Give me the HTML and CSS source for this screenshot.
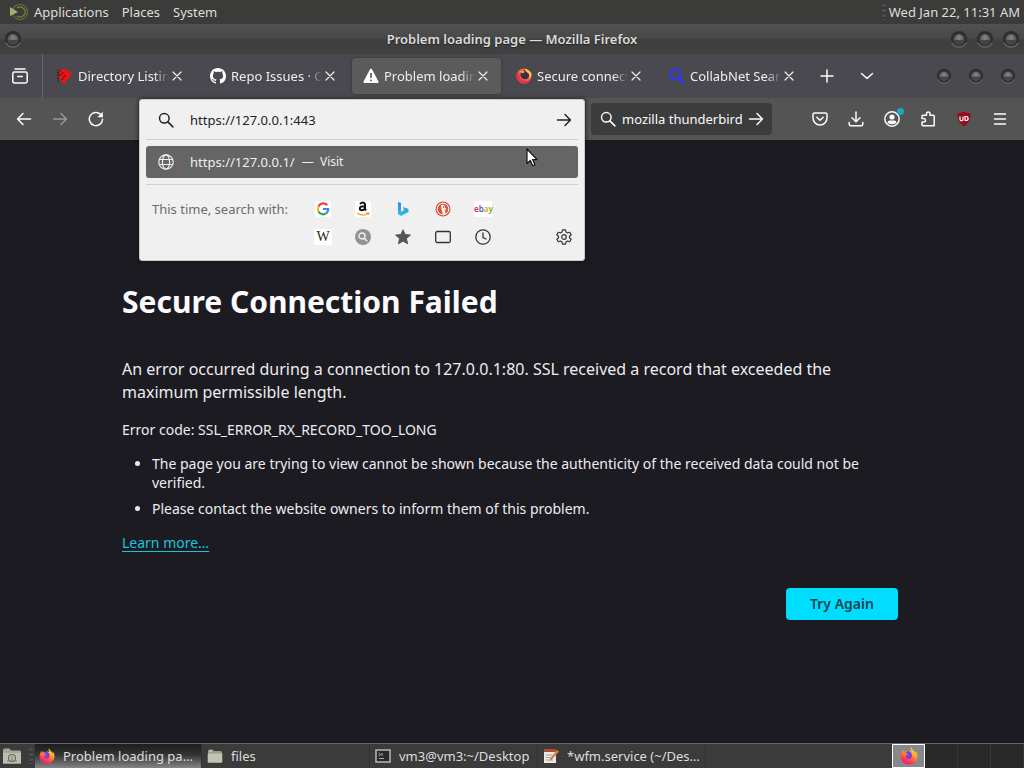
FILE: index.html
```html
<!DOCTYPE html>
<html lang="en">
<head>
<meta charset="utf-8">
<meta name="viewport" content="width=device-width, initial-scale=1">
<title>Problem loading page</title>
<link rel="stylesheet" href="styles.css">
</head>
<body>
<svg class="defs" aria-hidden="true">
  <defs>
    <linearGradient id="flame" x1="0.8" y1="0" x2="0.3" y2="1">
      <stop offset="0" stop-color="#fff04a"/><stop offset="0.4" stop-color="#ff9a2e"/><stop offset="0.75" stop-color="#ff3a4c"/><stop offset="1" stop-color="#e0208c"/>
    </linearGradient>
    <radialGradient id="bump" cx="0.5" cy="0.35" r="0.6">
      <stop offset="0" stop-color="#8a8a8a"/><stop offset="1" stop-color="#484848"/>
    </radialGradient>
    <linearGradient id="bingblue" x1="0" y1="0" x2="0" y2="1">
      <stop offset="0" stop-color="#2f86dd"/><stop offset="1" stop-color="#35c0ea"/>
    </linearGradient>
    <symbol id="firefox" viewBox="0 0 16 16">
      <circle cx="8" cy="8.6" r="5" fill="#7a3fd8"/>
      <path fill="url(#flame)" d="M10 .3c-.7 1.2-.4 2.4.8 3.7-1-.6-2-.7-3-.4 1.8.8 3 2.4 2.8 4.4-.2 1.700-1.600 2.800-3.100 2.600-1.400-.2-2.200-1.200-2.200-2.200 0-1.100.9-1.700 2-1.500-.2-.9-1.300-1.400-2.500-1.200.2-.8.7-1.500 1.400-1.900-1.100-.1-1.900.3-2.500 1-.4-.5-.5-1.400-.3-2.100C1.500 4 .5 6 .5 8.300.5 12.500 3.900 15.800 8 15.800s7.500-3.300 7.500-7.500c0-1.900-.7-3.500-1.800-4.700.1.800.1 1.400-.1 2C12.900 3.300 10.600 2.700 10 .3z"/>
    </symbol>
    <symbol id="magnifier" viewBox="0 0 16 16">
      <circle cx="6.300" cy="6.300" r="4.800" fill="none" stroke="currentColor" stroke-width="1.500"/>
      <path d="m9.900 9.900 5 5" stroke="currentColor" stroke-width="1.500" stroke-linecap="round"/>
    </symbol>
    <symbol id="arrow" viewBox="0 0 16 16">
      <path d="M1.500 8h13M9 2.500 14.500 8 9 13.500" fill="none" stroke="currentColor" stroke-width="1.500" stroke-linecap="round" stroke-linejoin="round"/>
    </symbol>
    <symbol id="cross" viewBox="0 0 10 10">
      <path d="m1 1 8 8M9 1 1 9" stroke="currentColor" stroke-width="1.200" stroke-linecap="round"/>
    </symbol>
    <symbol id="knob" viewBox="0 0 20 20">
      <circle cx="10" cy="10" r="9" fill="#2f2f2f"/>
      <path d="M2 14a9 9 0 0 0 16 0" fill="none" stroke="#626262" stroke-width="1.500"/>
      <circle cx="10" cy="10.500" r="6" fill="url(#bump)"/>
      <path d="M4.500 11a5.500 5.500 0 0 0 11 0z" fill="#444"/>
    </symbol>
    <symbol id="folder" viewBox="0 0 16 16">
      <path d="M1 3q0-1.500 1.500-1.500h3L7 3h6.500Q15 3 15 4.500v9H1z" fill="#999c8b"/>
      <path d="M.7 5.500h14.600V14q0 .8-.8.8H1.500q-.8 0-.8-.8z" fill="#c1c4b3"/>
      <path d="M2 3h3" stroke="#d9dbcf"/>
    </symbol>
  </defs>
</svg>

<header class="panel">
  <nav class="panel-menu">
    <button type="button"><svg class="distro" viewBox="0 0 20 18"><circle cx="11" cy="9" r="7.500" fill="none" stroke="#66743a" stroke-width="1.200"/><path d="M8 5a5 5 0 1 1 0 8" fill="none" stroke="#7b8945" stroke-width="1.300"/><path d="m1 4 8 5-8 4z" fill="#a5ae6d"/></svg>Applications</button>
    <button type="button">Places</button>
    <button type="button">System</button>
  </nav>
  <span class="handle"></span>
  <time class="clock">Wed Jan 22, 11:31 AM</time>
</header>

<div class="titlebar">
  <button type="button" aria-label="Window menu"><svg class="knob"><use href="#knob"/></svg></button>
  <h1 class="window-title">Problem loading page — Mozilla Firefox</h1>
  <div class="window-buttons">
    <button type="button" aria-label="Minimize"><svg class="knob"><use href="#knob"/></svg></button>
    <button type="button" aria-label="Maximize"><svg class="knob"><use href="#knob"/></svg></button>
    <button type="button" aria-label="Close"><svg class="knob"><use href="#knob"/></svg></button>
  </div>
</div>

<div class="tabstrip">
  <button type="button" class="tab-overview" aria-label="Firefox View"><svg class="icon" viewBox="0 0 16 16"><path d="M3 .9h10M2.500 4h11q1.700 0 1.700 1.700v7.500q0 1.700-1.700 1.700h-11Q.8 14.900.8 13.200V5.700Q.8 4 2.500 4zM5.700 8.600h4.600" fill="none" stroke="currentColor" stroke-width="1.500" stroke-linecap="round"/></svg></button>
  <div class="tabs">
    <div class="tab">
      <svg class="icon" viewBox="0 0 16 16"><path fill="#ed1218" d="m1 1 4 1 3-2 1 3 3-1 1 3 3 1-3 2-1 3-3 1-1 4-3-1-1-4-3-2 2-3z"/><path d="M1 1.500v13M2.500 3h2M2 7h3M5 5h2M7 8h2M5 12l2-3" stroke="#23080a" stroke-width="1" stroke-dasharray="1.500 1"/></svg>
      <span class="tab-label">Directory Listing</span><button type="button" class="tab-close" aria-label="Close tab"><svg><use href="#cross"/></svg></button>
    </div>
    <div class="tab">
      <svg class="icon" viewBox="0 0 16 16"><path fill="#fff" d="M8 0C3.580 0 0 3.580 0 8c0 3.540 2.290 6.530 5.470 7.590.4.070.550-.170.550-.380 0-.190-.010-.820-.010-1.490-2.010.370-2.530-.490-2.690-.940-.090-.230-.480-.940-.820-1.130-.280-.150-.680-.520-.010-.530.630-.010 1.080.580 1.230.820.720 1.210 1.870.870 2.330.660.070-.520.280-.870.510-1.070-1.780-.2-3.640-.890-3.640-3.950 0-.870.310-1.590.820-2.150-.080-.2-.360-1.020.080-2.120 0 0 .670-.210 2.200.820.640-.180 1.320-.270 2-.270s1.360.090 2 .270c1.530-1.040 2.200-.820 2.200-.820.440 1.100.160 1.920.080 2.120.510.560.820 1.270.820 2.150 0 3.070-1.870 3.750-3.650 3.950.290.250.540.730.540 1.480 0 1.070-.010 1.930-.010 2.200 0 .210.150.460.550.380A8 8 0 0 0 16 8c0-4.420-3.580-8-8-8z"/></svg>
      <span class="tab-label">Repo Issues · GitHub</span><button type="button" class="tab-close" aria-label="Close tab"><svg><use href="#cross"/></svg></button>
    </div>
    <div class="tab tab-active">
      <svg class="icon" viewBox="0 0 16 16"><path d="M8 1.800 14.500 14h-13z" fill="#fff" stroke="#fff" stroke-width="2.200" stroke-linejoin="round"/><path d="M8 5v5" stroke="#444" stroke-width="1.500"/><circle cx="8" cy="12.300" r=".9" fill="#444"/></svg>
      <span class="tab-label">Problem loading page</span><button type="button" class="tab-close" aria-label="Close tab"><svg><use href="#cross"/></svg></button>
    </div>
    <div class="tab">
      <svg class="icon" viewBox="0 0 16 16"><circle cx="8" cy="8" r="7.500" fill="#fb6436"/><path d="M1 4.500A7.500 7.500 0 0 0 6 15.200q6 1.200 9-4-4 3-8 1T3.500 6z" fill="#e8344b"/><circle cx="9" cy="6.800" r="4.500" fill="#34304e"/><path d="M9.500.8q-1 2 2 4t1 5.500q3-1 3-4T9.500.8z" fill="#ffc444"/><path d="M3.500 3.500q3-2 5.500.5L6.500 5.500z" fill="#ff9a38"/></svg>
      <span class="tab-label">Secure connection</span><button type="button" class="tab-close" aria-label="Close tab"><svg><use href="#cross"/></svg></button>
    </div>
    <div class="tab">
      <svg class="icon" viewBox="0 0 16 16"><circle cx="6.500" cy="6.500" r="5" fill="none" stroke="#303de5" stroke-width="2.500"/><path d="m9.500 10.500 5 4.500" stroke="#303de5" stroke-width="3"/></svg>
      <span class="tab-label">CollabNet Search</span><button type="button" class="tab-close" aria-label="Close tab"><svg><use href="#cross"/></svg></button>
    </div>
  </div>
  <button type="button" class="tool" aria-label="New tab"><svg class="icon" viewBox="0 0 16 16"><path d="M8 2v12M2 8h12" stroke="currentColor" stroke-width="1.500" stroke-linecap="round"/></svg></button>
  <button type="button" class="tool" aria-label="List all tabs"><svg class="icon" viewBox="0 0 16 16"><path d="m2.500 5.500 5.500 5 5.500-5" fill="none" stroke="currentColor" stroke-width="1.500" stroke-linecap="round" stroke-linejoin="round"/></svg></button>
  <div class="client-buttons">
    <button type="button" aria-label="Minimize"><svg class="knob"><use href="#knob"/></svg></button>
    <button type="button" aria-label="Maximize"><svg class="knob"><use href="#knob"/></svg></button>
    <button type="button" aria-label="Close"><svg class="knob"><use href="#knob"/></svg></button>
  </div>
</div>

<div class="toolbar">
  <div class="tools">
    <button type="button" class="tool" aria-label="Back"><svg class="icon" viewBox="0 0 16 16"><path d="M14.500 8h-13M7 2.500 1.500 8 7 13.500" fill="none" stroke="currentColor" stroke-width="1.500" stroke-linecap="round" stroke-linejoin="round"/></svg></button>
    <button type="button" class="tool" aria-label="Forward" disabled><svg class="icon"><use href="#arrow"/></svg></button>
    <button type="button" class="tool" aria-label="Reload"><svg class="icon" viewBox="0 0 16 16"><path d="M14.500 8.200A6.600 6.600 0 1 1 12.700 3.500L14 5" fill="none" stroke="currentColor" stroke-width="1.500" stroke-linecap="round"/><path d="M9.300 6.200h5.500V.8z" fill="currentColor"/></svg></button>
  </div>
  <div class="url-slot">
    <div class="url-popup">
      <div class="url-row">
        <svg class="icon"><use href="#magnifier"/></svg>
        <input class="url-input" type="text" aria-label="Address" value="https://127.0.0.1:443">
        <button type="button" aria-label="Go"><svg class="icon"><use href="#arrow"/></svg></button>
      </div>
      <div class="suggestions">
        <a class="suggestion" href="#">
          <svg class="icon" viewBox="0 0 16 16"><g fill="none" stroke="currentColor" stroke-width="1.200"><circle cx="8" cy="8" r="7.200"/><ellipse cx="8" cy="8" rx="3.600" ry="7.200"/><path d="M1.500 5.500h13M1.500 10.500h13"/></g></svg>
          <span class="suggestion-url">https://127.0.0.1/</span><span class="suggestion-action">—&nbsp; Visit</span>
          <svg class="pointer" viewBox="0 0 12 19"><path d="M1 1v14.500l3.300-3 2.400 5.300 2.300-1-2.400-5.200H11z" fill="#fff" stroke="#111" stroke-width="1.200" stroke-linejoin="round"/></svg>
        </a>
      </div>
      <div class="one-offs">
        <span class="one-offs-label">This time, search with:</span>
        <div class="engines">
          <button type="button" aria-label="Google"><svg class="engine" viewBox="0 0 16 16"><rect width="16" height="16" rx="2" fill="#fff"/><g fill="none" stroke-width="2.200"><path d="M12.200 4.200A5.200 5.200 0 0 0 3.500 5.500" stroke="#ea4335"/><path d="M3.500 5.500a5.200 5.200 0 0 0 0 5" stroke="#fbbc05"/><path d="M3.500 10.500a5.200 5.200 0 0 0 7.900 1.600" stroke="#34a853"/><path d="M11.400 12.100A5.200 5.200 0 0 0 13.200 8H8" stroke="#4285f4"/></g></svg></button>
          <button type="button" aria-label="Amazon"><svg class="engine" viewBox="0 0 16 16"><rect width="16" height="16" rx="2" fill="#fff"/><path d="M5 3q3-2.800 5 0v5.200l1.300 1M10 5.200q-5.200-.2-5.200 2.300 0 1.800 2.200 1.800T10 7" fill="none" stroke="#111" stroke-width="2"/><path d="M2 12q6 4 11 .5M11 12h3l-1 2" fill="none" stroke="#f59b22" stroke-width="1.200"/></svg></button>
          <button type="button" aria-label="Bing"><svg class="engine" viewBox="0 0 16 16"><path d="m3 1 3 1v9l3-2-1-3 5.500 2v3L6 15l-3-2z" fill="url(#bingblue)"/></svg></button>
          <button type="button" aria-label="DuckDuckGo"><svg class="engine" viewBox="0 0 16 16"><circle cx="8" cy="8" r="7.500" fill="#d9553c"/><circle cx="8" cy="8" r="5.800" fill="none" stroke="#fff"/><path d="M6 4q4-1 4 3l1.500 1-1.500 1 .5 4.500H8L6.500 8z" fill="#fff"/><path d="m9 8 3 .5L9 9.500z" fill="#f8b931"/><circle cx="8.500" cy="6" r=".7" fill="#35415f"/></svg></button>
          <button type="button" aria-label="eBay"><span class="ebay"><i>e</i><i>b</i><i>a</i><i>y</i></span></button>
          <button type="button" aria-label="Wikipedia"><span class="wiki">W</span></button>
          <button type="button" aria-label="Search engine"><svg class="engine" viewBox="0 0 16 16"><circle cx="8" cy="8" r="8" fill="#929292"/><circle cx="7" cy="7" r="3" fill="none" stroke="#f2f2f2" stroke-width="1.300"/><path d="m9.200 9.200 3 3" stroke="#f2f2f2" stroke-width="1.500"/></svg></button>
          <button type="button" aria-label="Bookmarks"><svg class="engine" viewBox="0 0 16 16"><path d="m8 .8 2.100 4.800 5.300.5-4 3.500 1.200 5.200L8 12.100l-4.600 2.700 1.200-5.200-4-3.500 5.300-.5z" fill="#555" stroke="#555" stroke-linejoin="round"/></svg></button>
          <button type="button" aria-label="Tabs"><svg class="engine" viewBox="0 0 16 16"><rect x=".7" y="2.500" width="14.600" height="11" rx="1.500" fill="none" stroke="#333" stroke-width="1.300"/></svg></button>
          <button type="button" aria-label="History"><svg class="engine" viewBox="0 0 16 16"><circle cx="8" cy="8" r="7.200" fill="none" stroke="#333" stroke-width="1.300"/><path d="M8 4v4.500l3 1.500" fill="none" stroke="#333" stroke-width="1.300" stroke-linecap="round"/></svg></button>
        </div>
        <button type="button" class="settings" aria-label="Search settings"><svg class="engine" viewBox="0 0 16 16"><path d="m6.500.8h3l.5 2.300 1.500.9 2.200-.8 1.500 2.600L13.500 7.300v1.400l1.700 1.500-1.500 2.600-2.200-.8-1.500.9-.5 2.300h-3L6 12.900 4.500 12l-2.200.8L.8 10.200l1.700-1.500V7.300L.8 5.800l1.500-2.600 2.200.8L6 3.100z" fill="none" stroke="#333" stroke-width="1.200" stroke-linejoin="round"/><circle cx="8" cy="8" r="2.300" fill="none" stroke="#333" stroke-width="1.200"/></svg></button>
      </div>
    </div>
  </div>
  <div class="search-box">
    <svg class="icon"><use href="#magnifier"/></svg>
    <input type="text" aria-label="Search" value="mozilla thunderbird">
    <button type="button" aria-label="Search"><svg class="icon"><use href="#arrow"/></svg></button>
  </div>
  <div class="tools">
    <button type="button" class="tool" aria-label="Save to Pocket"><svg class="icon" viewBox="0 0 16 16"><path d="M2.500 2h11q1.500 0 1.500 1.500V7A7 7 0 0 1 1 7V3.500Q1 2 2.500 2zM4.800 6.300 8 9.300l3.200-3" fill="none" stroke="currentColor" stroke-width="1.500" stroke-linecap="round" stroke-linejoin="round"/></svg></button>
    <button type="button" class="tool" aria-label="Downloads"><svg class="icon" viewBox="0 0 16 16"><path d="M8 1v9.500M4 6.800l4 4 4-4M1.200 11.500v1.800q0 1.500 1.500 1.500h10.600q1.500 0 1.500-1.500v-1.800" fill="none" stroke="currentColor" stroke-width="1.500" stroke-linecap="round" stroke-linejoin="round"/></svg></button>
    <button type="button" class="tool account" aria-label="Account"><svg class="icon" viewBox="0 0 16 16"><circle cx="8" cy="8" r="7.200" fill="none" stroke="currentColor" stroke-width="1.500"/><circle cx="8" cy="6" r="2.600" fill="currentColor"/><path d="M3.500 11.800q0-2.300 2.300-2.300h4.400q2.300 0 2.300 2.300-4.500 3-9 0z" fill="currentColor"/></svg><span class="account-badge"></span></button>
    <button type="button" class="tool" aria-label="Extensions"><svg class="icon" viewBox="0 0 16 16"><path d="M6.500 4.200V3q0-2 1.800-2T10 3v1.200h3.200q1 0 1 1v9.500H3q-1 0-1-1V11h1.700q1.800 0 1.800-1.700T3.700 7.500H2V5.200q0-1 1-1z" fill="none" stroke="currentColor" stroke-width="1.500" stroke-linejoin="round"/></svg></button>
    <button type="button" class="tool" aria-label="uBlock Origin"><svg class="icon" viewBox="0 0 16 16"><path d="M8 .5q3 1.700 6.700 1.700 0 9.500-6.700 13.300Q1.300 11.700 1.300 2.200 5 2.200 8 .5z" fill="#970b18"/><path d="M4 5.500v2.800q0 1.500 1.500 1.500T7 8.300V5.500M9 5.500v4h.8q2.300 0 2.300-2t-2.300-2z" fill="none" stroke="#fff" stroke-width="1.200"/></svg></button>
    <button type="button" class="tool" aria-label="Application menu"><svg class="icon" viewBox="0 0 16 16"><path d="M2.500 3h11M2.500 8h11M2.500 13h11" stroke="currentColor" stroke-width="1.500" stroke-linecap="round"/></svg></button>
  </div>
</div>

<main class="page">
  <h2>Secure Connection Failed</h2>
  <p class="summary">An error occurred during a connection to 127.0.0.1:80. SSL received a record that exceeded the maximum permissible length.</p>
  <p class="detail">Error code: SSL_ERROR_RX_RECORD_TOO_LONG</p>
  <ul class="detail">
    <li>The page you are trying to view cannot be shown because the authenticity of the received data could not be verified.</li>
    <li>Please contact the website owners to inform them of this problem.</li>
  </ul>
  <p class="detail"><a href="#">Learn more…</a></p>
  <div class="actions"><button type="button" class="primary">Try Again</button></div>
</main>

<footer class="taskbar">
  <button type="button" class="show-desktop" aria-label="Show desktop"><svg class="desk-icon" viewBox="0 0 18 16"><path d="M0 2q0-1.500 1.500-1.500h5L8 2.500h8.500q1.500 0 1.500 1.500v11.500H0z" fill="#a4a898"/><path d="M0 5h18v10.500H0z" fill="#bcbfb0"/><circle cx="9" cy="10" r="3.500" fill="none" stroke="#686d5e" stroke-width="1.200"/><path d="M4 13h10M9 8v4" stroke="#74786a"/></svg></button>
  <span class="handle"></span>
  <div class="tasks">
    <button type="button" class="task task-active"><svg class="task-icon"><use href="#firefox"/></svg><span>Problem loading page — Mozilla Firefox</span></button>
    <button type="button" class="task"><svg class="task-icon"><use href="#folder"/></svg><span>files</span></button>
    <button type="button" class="task"><svg class="task-icon" viewBox="0 0 16 16"><rect x="1" y="2" width="14" height="12" fill="#292b2b" stroke="#b8b8b8" stroke-width="1.500"/><path d="m3.500 5 2 1.500-2 1.500M7 5v3M4 10.500h5" stroke="#a9a9a9" fill="none"/></svg><span>vm3@vm3:~/Desktop</span></button>
    <button type="button" class="task"><svg class="task-icon" viewBox="0 0 16 16"><path d="M1 2h12v13H1z" fill="#ece9e3"/><path d="M1 1h12v3H1z" fill="#ad4c38"/><path d="M3 7h6M3 9.500h4M3 12h7" stroke="#a8a49c"/><path d="m14 2 2 1.500-7 8-2.500 1.500.7-3z" fill="#d88344"/></svg><span>*wfm.service (~/Des…</span></button>
  </div>
  <div class="workspaces">
    <button type="button" class="workspace workspace-active" aria-label="Workspace 1"><svg><use href="#firefox"/></svg></button>
    <button type="button" class="workspace" aria-label="Workspace 2"></button>
    <button type="button" class="workspace" aria-label="Workspace 3"></button>
    <button type="button" class="workspace" aria-label="Workspace 4"></button>
  </div>
</footer>
</body>
</html>
```

FILE: styles.css
```css
* {
  box-sizing: border-box;
}

body {
  margin: 0;
  min-height: 100vh;
  display: flex;
  flex-direction: column;
  background: #1c1b22;
  color: #fbfbfe;
  font: 13px/18px "Noto Sans", "Open Sans", sans-serif;
}

button,
input {
  margin: 0;
  padding: 0;
  border: 0;
  background: none;
  color: inherit;
  font: inherit;
}

button {
  display: inline-flex;
  align-items: center;
  justify-content: center;
}

input {
  min-width: 0;
  outline: 0;
}

svg {
  display: block;
  flex: none;
}

.defs {
  position: absolute;
  width: 0;
  height: 0;
}

.icon {
  width: 16px;
  height: 16px;
}

/* Desktop panel */
.panel {
  display: flex;
  align-items: center;
  height: 24px;
  padding: 0 4px 0 9px;
  background: #3b3b39;
  color: #dedede;
}

.panel-menu {
  display: flex;
  gap: 13px;
  margin-right: auto;
}

.panel-menu button {
  gap: 5px;
}

.distro {
  width: 20px;
  height: 18px;
}

.handle {
  width: 4px;
  height: 16px;
  background: repeating-linear-gradient(#4c4c4c 0 3px, #363636 3px 5px);
}

.clock {
  margin-left: 3px;
}

/* Window title */
.titlebar {
  display: grid;
  grid-template-columns: 1fr auto 1fr;
  align-items: center;
  height: 30px;
  padding: 0 4px;
  background: linear-gradient(#515151, #494949 45%, #3f3f3f 55%, #404040);
}

.titlebar > button {
  justify-self: start;
}

.window-title {
  margin: 0;
  font-size: 13px;
  font-weight: 600;
  color: #dcdcdc;
  text-shadow: 0 1px 1px #222;
}

.window-buttons,
.client-buttons {
  display: flex;
  gap: 8px;
  justify-content: flex-end;
}

.knob {
  width: 18px;
  height: 18px;
}

/* Tabs */
.tabstrip {
  display: flex;
  align-items: center;
  height: 44px;
  background: #4a494f;
}

.tab-overview {
  width: 43px;
  height: 44px;
  padding-right: 2px;
  border-right: 1px solid #69686e;
}

.tabs {
  display: flex;
  gap: 4px;
  margin: 0 4px 0 3px;
}

.tab {
  display: flex;
  align-items: center;
  width: 149px;
  height: 36px;
  padding: 0 13px 0 11px;
  border-radius: 4px;
  color: #eeeeef;
}

.tab-active {
  background: #5b5b5b;
  box-shadow: 0 0 3px #333;
}

.tab-label {
  flex: 1;
  margin-left: 5px;
  overflow: hidden;
  white-space: nowrap;
  mask-image: linear-gradient(to right, #000 84%, transparent);
}

.tab-close {
  margin-left: 3px;
}

.tab-close svg {
  width: 10px;
  height: 10px;
}

.tabstrip .tool {
  width: 32px;
  margin-right: 8px;
}

.client-buttons {
  gap: 16px;
  margin-left: auto;
  padding-right: 8px;
}

.client-buttons .knob {
  width: 16px;
  height: 16px;
}

/* Toolbar */
.toolbar {
  display: flex;
  align-items: center;
  height: 43px;
  padding: 0 8px;
  background: #545454;
  border-bottom: 1px solid #19191c;
}

.tools {
  display: flex;
  gap: 4px;
}

.tool {
  width: 32px;
  height: 32px;
}

.tool:disabled {
  color: #969696;
}

.account {
  position: relative;
}

.account-badge {
  position: absolute;
  top: 5px;
  right: 4px;
  width: 7px;
  height: 7px;
  border-radius: 50%;
  background: #1ba7c1;
}

.url-slot {
  position: relative;
  flex: 1;
  height: 40px;
  margin-left: 27px;
}

.url-popup {
  position: absolute;
  inset: 0 0 auto;
  z-index: 2;
  padding: 0 6px;
  border: 1px solid #c9c9c9;
  border-radius: 3px;
  background: #f0f0f0;
  color: #222;
  box-shadow: 0 0 4px #111;
}

.url-row {
  display: flex;
  align-items: center;
  height: 40px;
  padding: 0 6px 0 12px;
  border-bottom: 1px solid #cfcfcf;
}

.url-input {
  flex: 1;
  margin-left: 16px;
}

.suggestions {
  padding: 6px 0;
  border-bottom: 1px solid #cfcfcf;
}

.suggestion {
  position: relative;
  display: flex;
  align-items: center;
  height: 32px;
  padding: 0 12px;
  border-radius: 3px;
  background: #656565;
  color: #efefef;
  text-decoration: none;
}

.suggestion-url {
  margin: 0 7px 0 16px;
}

.suggestion-action {
  font-size: 12px;
}

.pointer {
  position: absolute;
  top: 2px;
  right: 40px;
  width: 12px;
  height: 19px;
}

.one-offs {
  display: flex;
  align-items: flex-start;
  padding: 10px 6px 9px;
}

.one-offs-label {
  flex: none;
  width: 151px;
  line-height: 28px;
  color: #6c6c6c;
}

.engines {
  display: grid;
  grid-template-columns: repeat(5, 40px);
  grid-auto-rows: 28px;
}

.engine {
  width: 16px;
  height: 16px;
}

.ebay,
.wiki {
  width: 18px;
  background: #fff;
  line-height: 16px;
}

.ebay {
  font-size: 8px;
}

.ebay i {
  font-style: normal;
  font-weight: 600;
  color: #d9304d;
}

.ebay i:nth-child(2) {
  color: #3f5bc4;
}

.ebay i:nth-child(3) {
  color: #d9a400;
}

.ebay i:nth-child(4) {
  color: #6fa91c;
}

.wiki {
  font-family: "Liberation Serif", serif;
  font-size: 14px;
}

.settings {
  align-self: flex-end;
  width: 16px;
  height: 28px;
  margin-left: auto;
}

.search-box {
  display: flex;
  align-items: center;
  width: 181px;
  height: 32px;
  margin: 0 32px 0 6px;
  padding: 0 8px 0 9px;
  border-radius: 4px;
  background: #3c3c3c;
}

.search-box input {
  flex: 1;
  margin: 0 6px;
}

/* Error page */
.page {
  flex: 1;
  padding: 141px 126px 40px 122px;
  color: #ececf0;
}

.page h2 {
  margin: 0 0 36px;
  color: #fbfbfe;
  font-size: 30px;
  font-weight: 700;
  line-height: 40px;
}

.summary {
  margin: 0 0 16px;
  font-size: 16px;
  line-height: 23px;
}

.detail {
  margin: 0 0 15px;
  font-size: 14px;
  line-height: 19px;
}

ul.detail {
  padding-left: 30px;
}

.detail li + li {
  margin-top: 7px;
}

.page a {
  color: #16c5dc;
  text-underline-offset: 3px;
}

.actions {
  display: flex;
  justify-content: flex-end;
  padding-top: 21px;
}

.primary {
  min-width: 112px;
  height: 32px;
  border-radius: 4px;
  background: #00ddff;
  color: #1d4452;
  font-size: 14px;
  font-weight: 600;
}

/* Taskbar */
.taskbar {
  display: flex;
  align-items: center;
  height: 25px;
  border-top: 1px solid #656565;
  background: #3b3b3b;
  color: #dedede;
}

.show-desktop {
  margin: 0 8px 0 3px;
}

.desk-icon {
  width: 18px;
  height: 16px;
}

.tasks {
  display: flex;
  flex: 1;
  gap: 1px;
  margin-left: 2px;
}

.task {
  flex: 0 1 167px;
  justify-content: flex-start;
  gap: 8px;
  min-width: 0;
  height: 24px;
  padding: 0 4px;
  border-right: 1px solid #323232;
}

.task span {
  overflow: hidden;
  text-overflow: ellipsis;
  white-space: nowrap;
}

.task-active {
  background: linear-gradient(#1d1d1d, #333 45%, #858585);
}

.task-icon {
  width: 16px;
  height: 16px;
}

.workspaces {
  display: flex;
  height: 24px;
}

.workspace {
  width: 33px;
  border-right: 1px solid #373737;
  background: #282828;
}

.workspace-active {
  border: 1px solid #fff;
  background: #88888b;
}

.workspace-active svg {
  width: 18px;
  height: 18px;
}
```
